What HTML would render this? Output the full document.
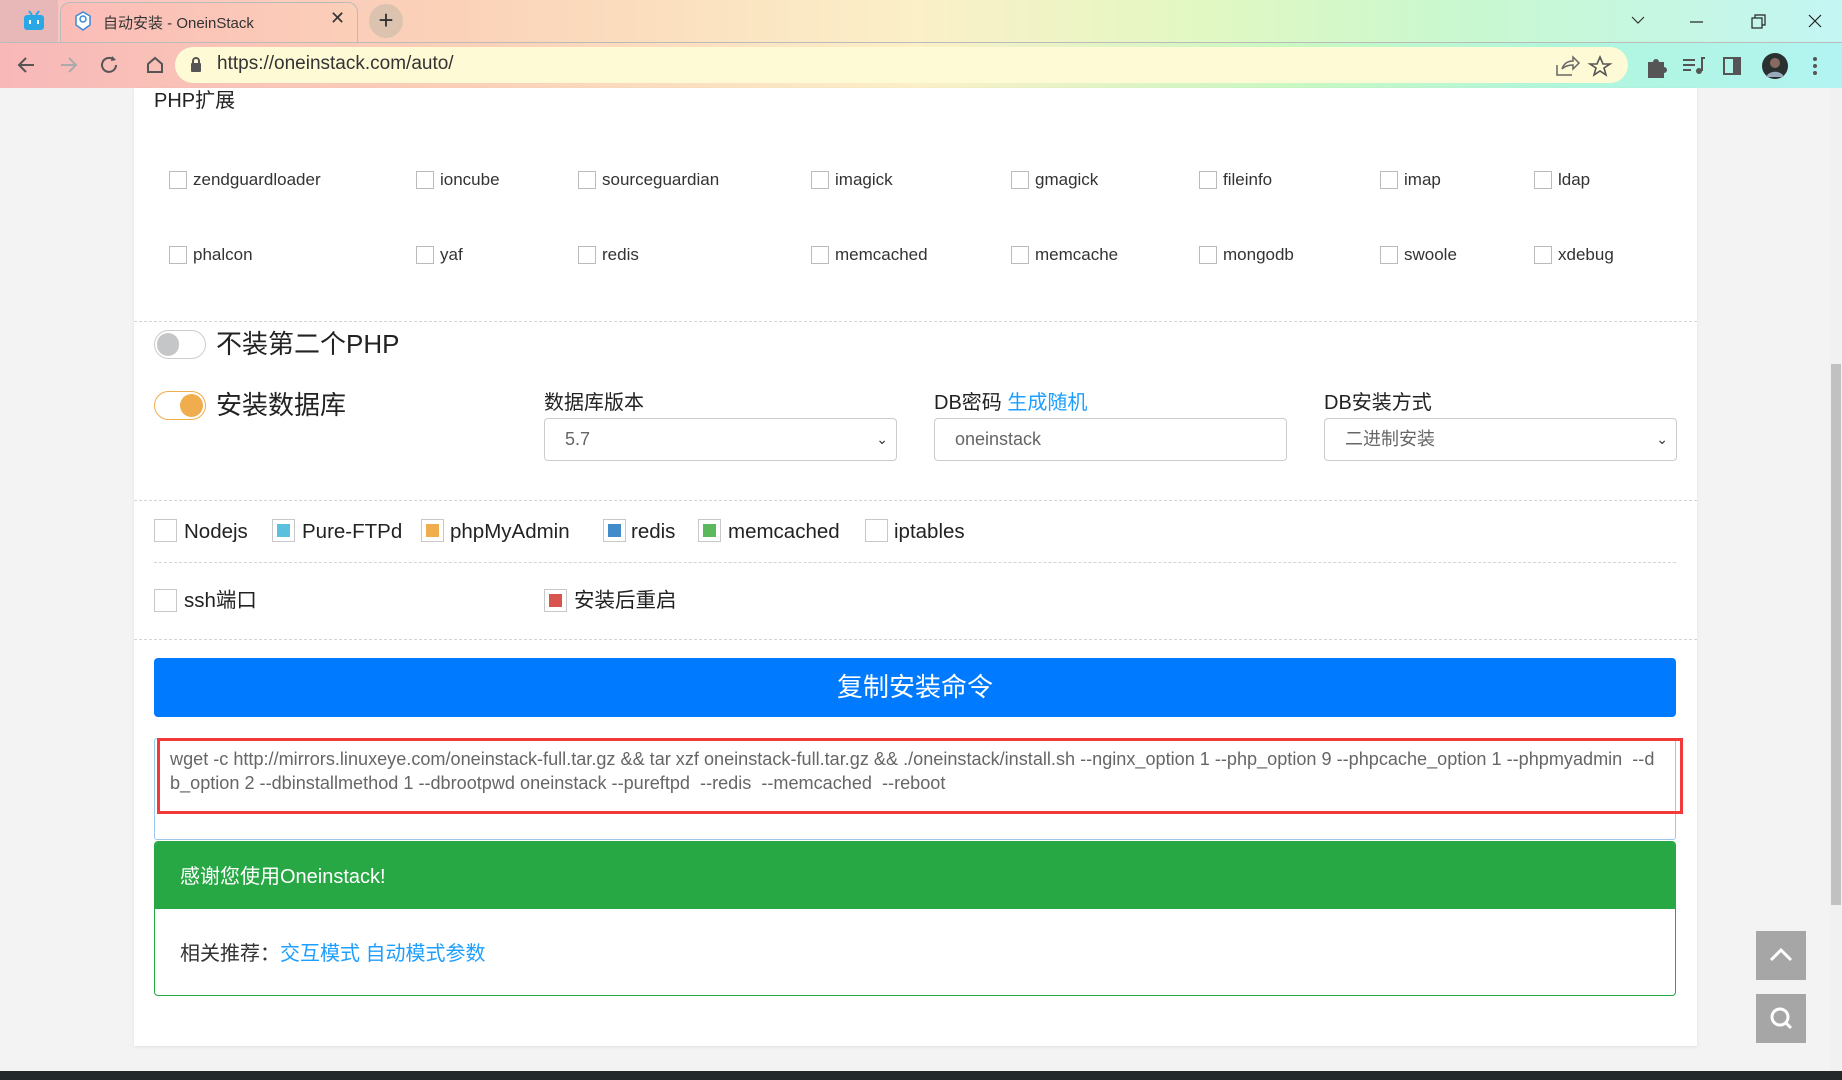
<!DOCTYPE html>
<html><head><meta charset="utf-8"><style>
*{margin:0;padding:0;box-sizing:border-box}
body{width:1842px;height:1080px;overflow:hidden;background:#f3f3f3;font-family:"Liberation Sans","Noto Sans CJK SC",sans-serif;color:#222;position:relative}
.a{position:absolute;white-space:nowrap}
.cb{position:absolute;width:18px;height:18px;border:1px solid #bbb;background:#fff}
.lb{position:absolute;font-size:17px;color:#333;white-space:nowrap;line-height:20px}
.cb2{position:absolute;width:23px;height:23px;border:1px solid #c8c8c8;background:#fff}
.cb2 i{position:absolute;left:4px;top:4px;width:13px;height:13px}
.lb2{position:absolute;font-size:20.5px;color:#222;line-height:24px;white-space:nowrap}
.dash{position:absolute;height:0;border-top:1px dashed #d5d5d5}
.sel{position:absolute;height:43px;border:1px solid #ccc;border-radius:4px;background:#fff;font-size:18px;color:#666;padding:0 20px;line-height:41px}
.lab{position:absolute;font-size:20px;color:#222;white-space:nowrap}
</style></head><body>
<div class="a" style="left:0;top:0;width:1842px;height:42px;background:linear-gradient(90deg,#f9c2c2 0%,#fbd2b8 25%,#fbf0c8 50%,#e2f8c2 65%,#c8f8d0 80%,#c4f6f4 100%)"></div>
<div class="a" style="left:0;top:0;width:58px;height:42px;background:#e8b8b8"></div>
<svg class="a" style="left:22px;top:10px" width="24" height="22" viewBox="0 0 24 22"><rect x="2" y="5" width="20" height="15" rx="3" fill="#2aa8e6"/><path d="M7 1l3 4M17 1l-3 4" stroke="#2aa8e6" stroke-width="2"/><rect x="7" y="10" width="2" height="4" fill="#fff"/><rect x="15" y="10" width="2" height="4" fill="#fff"/></svg>
<div class="a" style="left:60px;top:2px;width:298px;height:42px;background:linear-gradient(90deg,#fbbcb8,#fbcfb8);border-radius:10px 10px 0 0;border:1px solid #bbb;border-bottom:none"></div>
<svg class="a" style="left:74px;top:11px" width="18" height="20" viewBox="0 0 18 20"><path d="M9 1l7 4v9l-7 5-7-5V5z" fill="#fff" stroke="#3a8ad8" stroke-width="1.5"/><circle cx="9" cy="8" r="3" fill="none" stroke="#3a8ad8" stroke-width="1.5"/></svg>
<div class="a" style="left:103px;top:12px;font-size:15px;color:#333">自动安装 - OneinStack</div>
<div class="a" style="left:330px;top:8px;font-size:18px;color:#333">✕</div>
<div class="a" style="left:369px;top:4px;width:34px;height:34px;border-radius:17px;background:#dcc3b0;text-align:center;font-size:26px;line-height:32px;color:#333">+</div>
<svg class="a" style="left:1630px;top:10px" width="200" height="22" viewBox="0 0 200 22"><path d="M2 7l6 6 6-6" stroke="#333" fill="none" stroke-width="1.2"/><path d="M60 12h13" stroke="#222" stroke-width="1.2"/><rect x="122" y="8" width="10" height="10" fill="none" stroke="#222" stroke-width="1.2"/><path d="M125 8V5h10v10h-3" stroke="#222" fill="none" stroke-width="1.2"/><path d="M179 5l12 12M191 5l-12 12" stroke="#222" stroke-width="1.2"/></svg>
<div class="a" style="left:0;top:42px;width:1842px;height:46px;background:linear-gradient(90deg,#f8b8b8 0%,#fbd0b8 25%,#fbf0c8 50%,#c9f8c2 70%,#b0f6dc 85%,#b2f4f2 100%);border-top:1px solid #bbb"></div>
<svg class="a" style="left:14px;top:52px" width="150" height="26" viewBox="0 0 150 26"><path d="M20 13H6m6-7l-7 7 7 7" stroke="#555" stroke-width="2" fill="none"/><path d="M47 13h14m-6-7l7 7-7 7" stroke="#aaa" stroke-width="2" fill="none"/><path d="M100 8a7 7 0 1 0 2 5" stroke="#555" stroke-width="2" fill="none"/><path d="M98 4l4 4-5 1" fill="#555"/><path d="M134 12l7-6 7 6v8h-14z" stroke="#555" stroke-width="2" fill="none"/></svg>
<div class="a" style="left:175px;top:47px;width:1453px;height:36px;border-radius:18px;background:#fffad6"></div>
<svg class="a" style="left:190px;top:57px" width="12" height="16" viewBox="0 0 12 16"><rect x="1" y="6" width="10" height="9" rx="1" fill="#555"/><path d="M3 6V4a3 3 0 0 1 6 0v2" stroke="#555" stroke-width="2" fill="none"/></svg>
<div class="a" style="left:217px;top:53px;font-size:19px;color:#333">https://oneinstack.com/auto/</div>
<svg class="a" style="left:1554px;top:55px" width="60" height="22" viewBox="0 0 60 22"><path d="M3 10v10h15M8 14c2-6 6-8 11-8V2l6 6-6 6v-4c-5 0-8 1-11 4" stroke="#666" stroke-width="1.5" fill="none"/><path d="M46 2l3 7h7l-6 4 2 7-6-4-6 4 2-7-6-4h7z" stroke="#555" stroke-width="1.6" fill="none"/></svg>
<svg class="a" style="left:1645px;top:52px" width="190" height="28" viewBox="0 0 190 28"><path d="M3 10h5a3 3 0 0 1 6 0h5v5a3 3 0 0 1 0 6v5H3z" fill="#555"/><path d="M38 8h12M38 13h12M38 18h8" stroke="#555" stroke-width="2"/><circle cx="54" cy="19" r="3" fill="#555"/><path d="M57 19V6h3" stroke="#555" stroke-width="2" fill="none"/><rect x="79" y="6" width="16" height="16" fill="none" stroke="#555" stroke-width="2"/><rect x="88" y="6" width="7" height="16" fill="#555"/><circle cx="130" cy="14" r="13" fill="#2a3030"/><circle cx="130" cy="11" r="5" fill="#8a6a60"/><path d="M121 25c3-7 15-7 18 0" fill="#9ab"/><circle cx="170" cy="7" r="2" fill="#555"/><circle cx="170" cy="14" r="2" fill="#555"/><circle cx="170" cy="21" r="2" fill="#555"/></svg>

<div class="a" style="left:1830px;top:88px;width:12px;height:983px;background:#f1f1f1"></div>
<div class="a" style="left:1831px;top:364px;width:10px;height:541px;background:#c1c1c1"></div>
<div class="a" style="left:134px;top:88px;width:1563px;height:958px;background:#fff;box-shadow:0 1px 3px rgba(0,0,0,.08)"></div>
<div class="a" style="left:0;top:1071px;width:1842px;height:9px;background:#25282b"></div>

<div class="a" style="left:154px;top:84px;font-size:20px;color:#222">PHP扩展</div>

<div class="cb" style="left:169px;top:171px"></div><div class="lb" style="left:193px;top:170px">zendguardloader</div>
<div class="cb" style="left:416px;top:171px"></div><div class="lb" style="left:440px;top:170px">ioncube</div>
<div class="cb" style="left:578px;top:171px"></div><div class="lb" style="left:602px;top:170px">sourceguardian</div>
<div class="cb" style="left:811px;top:171px"></div><div class="lb" style="left:835px;top:170px">imagick</div>
<div class="cb" style="left:1011px;top:171px"></div><div class="lb" style="left:1035px;top:170px">gmagick</div>
<div class="cb" style="left:1199px;top:171px"></div><div class="lb" style="left:1223px;top:170px">fileinfo</div>
<div class="cb" style="left:1380px;top:171px"></div><div class="lb" style="left:1404px;top:170px">imap</div>
<div class="cb" style="left:1534px;top:171px"></div><div class="lb" style="left:1558px;top:170px">ldap</div>

<div class="cb" style="left:169px;top:246px"></div><div class="lb" style="left:193px;top:245px">phalcon</div>
<div class="cb" style="left:416px;top:246px"></div><div class="lb" style="left:440px;top:245px">yaf</div>
<div class="cb" style="left:578px;top:246px"></div><div class="lb" style="left:602px;top:245px">redis</div>
<div class="cb" style="left:811px;top:246px"></div><div class="lb" style="left:835px;top:245px">memcached</div>
<div class="cb" style="left:1011px;top:246px"></div><div class="lb" style="left:1035px;top:245px">memcache</div>
<div class="cb" style="left:1199px;top:246px"></div><div class="lb" style="left:1223px;top:245px">mongodb</div>
<div class="cb" style="left:1380px;top:246px"></div><div class="lb" style="left:1404px;top:245px">swoole</div>
<div class="cb" style="left:1534px;top:246px"></div><div class="lb" style="left:1558px;top:245px">xdebug</div>

<div class="dash" style="left:134px;top:321px;width:1563px"></div>

<div class="a" style="left:154px;top:330px;width:52px;height:29px;border:1px solid #ccc;border-radius:15px;background:#fff"></div>
<div class="a" style="left:157px;top:333px;width:22px;height:23px;border-radius:12px;background:#c4c6c8"></div>
<div class="a" style="left:216px;top:324px;font-size:26px;color:#222">不装第二个PHP</div>
<div class="a" style="left:154px;top:391px;width:52px;height:29px;border:1px solid #f0ad4e;border-radius:15px;background:#fff"></div>
<div class="a" style="left:180px;top:394px;width:23px;height:23px;border-radius:12px;background:#f0ad4e"></div>
<div class="a" style="left:216px;top:385px;font-size:26px;color:#222">安装数据库</div>

<div class="lab" style="left:544px;top:386px">数据库版本</div>
<div class="sel" style="left:544px;top:418px;width:353px">5.7<span style="position:absolute;right:8px;top:0;font-size:14px;color:#333">&#8964;</span></div>
<div class="lab" style="left:934px;top:386px">DB密码 <span style="color:#1e9fff">生成随机</span></div>
<div class="sel" style="left:934px;top:418px;width:353px">oneinstack</div>
<div class="lab" style="left:1324px;top:386px">DB安装方式</div>
<div class="sel" style="left:1324px;top:418px;width:353px">二进制安装<span style="position:absolute;right:8px;top:0;font-size:14px;color:#333">&#8964;</span></div>

<div class="dash" style="left:134px;top:500px;width:1563px"></div>

<div class="cb2" style="left:154px;top:519px"></div><div class="lb2" style="left:184px;top:520px">Nodejs</div>
<div class="cb2" style="left:272px;top:519px"><i style="background:#5bc0de"></i></div><div class="lb2" style="left:302px;top:520px">Pure-FTPd</div>
<div class="cb2" style="left:421px;top:519px"><i style="background:#f0ad4e"></i></div><div class="lb2" style="left:450px;top:520px">phpMyAdmin</div>
<div class="cb2" style="left:603px;top:519px"><i style="background:#428bca"></i></div><div class="lb2" style="left:631px;top:520px">redis</div>
<div class="cb2" style="left:698px;top:519px"><i style="background:#5cb85c"></i></div><div class="lb2" style="left:728px;top:520px">memcached</div>
<div class="cb2" style="left:865px;top:519px"></div><div class="lb2" style="left:894px;top:520px">iptables</div>

<div class="dash" style="left:154px;top:562px;width:1522px"></div>

<div class="cb2" style="left:154px;top:589px"></div><div class="lb2" style="left:184px;top:589px">ssh端口</div>
<div class="cb2" style="left:544px;top:589px"><i style="background:#d9534f"></i></div><div class="lb2" style="left:574px;top:589px">安装后重启</div>

<div class="dash" style="left:134px;top:639px;width:1563px"></div>

<div class="a" style="left:154px;top:658px;width:1522px;height:59px;background:#007bff;border-radius:4px;color:#fff;font-size:26px;text-align:center;line-height:59px">复制安装命令</div>

<div class="a" style="left:154px;top:738px;width:1522px;height:102px;border:1px solid #9cc8f0;border-radius:3px;background:#fff"></div>
<div class="a" style="left:157px;top:738px;width:1526px;height:76px;border:3px solid #f23a3a"></div>
<div class="a" style="left:170px;top:747px;font-size:18.1px;color:#666;line-height:24px">wget -c http://mirrors.linuxeye.com/oneinstack-full.tar.gz &amp;&amp; tar xzf oneinstack-full.tar.gz &amp;&amp; ./oneinstack/install.sh --nginx_option 1 --php_option 9 --phpcache_option 1 --phpmyadmin &nbsp;--d<br>b_option 2 --dbinstallmethod 1 --dbrootpwd oneinstack --pureftpd &nbsp;--redis &nbsp;--memcached &nbsp;--reboot</div>

<div class="a" style="left:154px;top:841px;width:1522px;height:155px;border:1px solid #28a745;border-radius:4px;background:#fff;overflow:hidden">
<div style="height:67px;background:#28a745;color:#fff;font-size:20px;line-height:70px;padding-left:25px">感谢您使用Oneinstack!</div>
<div style="padding-left:25px;line-height:90px;font-size:20px;color:#333">相关推荐：<span style="color:#1e9fff">交互模式 自动模式参数</span></div>
</div>

<div class="a" style="left:1756px;top:931px;width:50px;height:49px;background:#a6a6a6"></div>
<svg class="a" style="left:1756px;top:931px" width="50" height="49"><path d="M15 29l10-10 10 10" stroke="#fff" stroke-width="3" fill="none"/></svg>
<div class="a" style="left:1756px;top:994px;width:50px;height:49px;background:#a6a6a6"></div>
<svg class="a" style="left:1756px;top:994px" width="50" height="49"><circle cx="24" cy="23" r="8" stroke="#fff" stroke-width="3" fill="none"/><path d="M30 29l5 5" stroke="#fff" stroke-width="3"/></svg>
</body></html>
